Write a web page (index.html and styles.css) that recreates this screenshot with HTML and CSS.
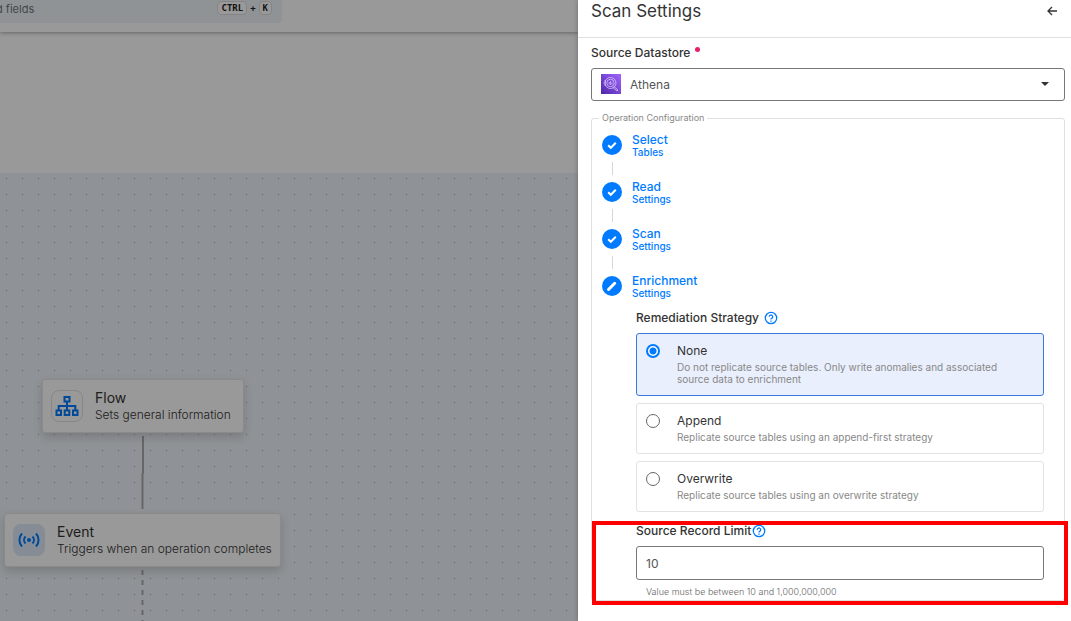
FILE: index.html
```html
<!DOCTYPE html>
<html lang="en">
<head>
<meta charset="utf-8">
<title>Scan Settings</title>
<link rel="stylesheet" href="styles.css">
</head>
<body>
<div class="app">
  <div class="workspace">
    <header class="topbar">
      <button class="search" type="button">
        <span class="search-text">d fields</span>
        <span class="shortcut"><kbd>CTRL</kbd><span>+</span><kbd>K</kbd></span>
      </button>
    </header>
    <main class="canvas">
      <svg class="edges" width="300" height="448" viewBox="0 0 300 448" aria-hidden="true">
        <path d="M143 263V300L142.500 301V336" />
        <path d="M142.500 397V448" stroke-dasharray="5 5" />
      </svg>
      <article class="node node-flow">
        <span class="node-icon outlined">
          <svg width="24" height="22" viewBox="0 0 24 22" fill="none" stroke="#007bff" stroke-width="2">
            <path d="M9.500 2h5v4.500h-5zM1.500 15.500h4.500v4.500H1.500zM9.700 15.500h4.600v4.500H9.700zM18 15.500h4.500v4.500H18zM12 6.500v9M3.700 15.500V11h16.600v4.500"/>
          </svg>
        </span>
        <div><h2>Flow</h2><p>Sets general information</p></div>
      </article>
      <article class="node node-event">
        <span class="node-icon tinted">
          <svg width="22" height="16" viewBox="0 0 22 16" fill="none" stroke="#007bff" stroke-width="2">
            <circle cx="11" cy="8" r="2" fill="#007bff" stroke="none"/>
            <path d="M7.500 4.500a5 5 0 0 0 0 7M14.500 4.500a5 5 0 0 1 0 7M4 1.500a9.500 9.500 0 0 0 0 13M18 1.500a9.500 9.500 0 0 1 0 13"/>
          </svg>
        </span>
        <div><h2>Event</h2><p>Triggers when an operation completes</p></div>
      </article>
    </main>
    <div class="backdrop"></div>
  </div>

  <aside class="drawer">
    <header class="drawer-header">
      <h1>Scan Settings</h1>
      <button class="back" type="button" aria-label="Back">
        <svg width="12" height="12" viewBox="0 0 12 12" fill="none" stroke="#333" stroke-width="1.300"><path d="M11 6H2M6 2L2 6L6 10"/></svg>
      </button>
    </header>
    <form class="drawer-body">
      <label class="label" for="datastore">Source Datastore<span class="required"></span></label>
      <div class="select-box">
        <select id="datastore"><option>Athena</option></select>
        <svg class="athena" width="20" height="20" viewBox="0 0 20 20" fill="none" stroke="#d9c4ff" aria-hidden="true">
          <defs><linearGradient id="violet" x1="0" y1="1" x2="1" y2="0"><stop offset="0" stop-color="#4d27a8"/><stop offset="1" stop-color="#a166ff"/></linearGradient></defs>
          <path d="M0 0h20v20H0z" fill="url(#violet)" stroke="none"/>
          <circle cx="9.500" cy="9" r="5.500" stroke-width=".8"/>
          <circle cx="9.500" cy="9" r="3.700" stroke-width=".8"/>
          <path d="M8.200 10.500V8M9.600 11V7M11 10.500V8.500M3 7h2M2.500 9h2.500M3 11h2" stroke-width=".8"/>
          <path d="M13 12.500l4 3.500-1 1-4-3.500z" stroke-width=".8"/>
        </svg>
        <svg class="caret" width="8" height="4" viewBox="0 0 8 4" aria-hidden="true"><path d="M0 0h8L4 4z" fill="#333"/></svg>
      </div>

      <fieldset class="config">
        <legend>Operation Configuration</legend>
        <ol class="steps">
          <li><span class="marker"><svg viewBox="0 0 20 20"><path d="M6.200 10.300l2.600 2.500 5-5"/></svg></span><span class="step-text"><strong>Select</strong><small>Tables</small></span></li>
          <li><span class="marker"><svg viewBox="0 0 20 20"><path d="M6.200 10.300l2.600 2.500 5-5"/></svg></span><span class="step-text"><strong>Read</strong><small>Settings</small></span></li>
          <li><span class="marker"><svg viewBox="0 0 20 20"><path d="M6.200 10.300l2.600 2.500 5-5"/></svg></span><span class="step-text"><strong>Scan</strong><small>Settings</small></span></li>
          <li><span class="marker"><svg viewBox="0 0 20 20"><path class="pencil" d="M6.500 13.500L12.700 7.300"/></svg></span><span class="step-text"><strong>Enrichment</strong><small>Settings</small></span></li>
        </ol>
        <div class="step-content">
          <div class="strategies" role="radiogroup" aria-labelledby="strategy-label">
            <div class="label help-label"><span id="strategy-label">Remediation Strategy</span>
              <svg class="help" viewBox="0 0 14 14"><circle cx="7" cy="7" r="5.700"/><path d="M5.300 5.700a1.700 1.700 0 1 1 2.700 1.400Q7 7.600 7 8.500M7 9.500v1.200"/></svg>
            </div>
            <label class="card"><input type="radio" name="strategy" checked><span><b>None</b><small>Do not replicate source tables. Only write anomalies and associated source data to enrichment</small></span></label>
            <label class="card"><input type="radio" name="strategy"><span><b>Append</b><small>Replicate source tables using an append-first strategy</small></span></label>
            <label class="card"><input type="radio" name="strategy"><span><b>Overwrite</b><small>Replicate source tables using an overwrite strategy</small></span></label>
          </div>
          <div class="limit">
            <div class="label help-label limit-label"><label for="limit">Source Record Limit</label>
              <svg class="help" viewBox="0 0 14 14"><circle cx="7" cy="7" r="5.700"/><path d="M5.300 5.700a1.700 1.700 0 1 1 2.700 1.400Q7 7.600 7 8.500M7 9.500v1.200"/></svg>
            </div>
            <input id="limit" type="text" inputmode="numeric" value="10" aria-describedby="limit-hint">
            <p id="limit-hint">Value must be between 10 and 1,000,000,000</p>
            <div class="highlight"></div>
          </div>
        </div>
      </fieldset>
    </form>
  </aside>
</div>
</body>
</html>
```

FILE: styles.css
```css
* { box-sizing: border-box; }
body { margin: 0; font-family: Inter, "Liberation Sans", sans-serif; font-size: 12px; line-height: 16px; color: #333; }
h1, h2, p, ol { margin: 0; padding: 0; font-weight: 400; }
svg { display: block; }
.app { display: flex; min-height: 100vh; }

.workspace { position: relative; flex: 1; min-width: 0; overflow: hidden; display: flex; flex-direction: column; background: #fff; }
.topbar { height: 32px; box-shadow: 0 1px 4px rgba(0, 0, 0, .35); }
.search { display: flex; justify-content: space-between; align-items: flex-start; width: 282px; height: 23px; padding: 1px 10px 0 0; border: 0; border-radius: 0 0 4px 0; background: #eef5fb; font: inherit; color: #70757a; }
.search-text { margin-left: -4px; font-size: 11px; }
.shortcut { display: flex; align-items: center; gap: 3px; height: 14px; color: #222; font: 700 9px/12px "DejaVu Sans Mono", monospace; }
kbd { padding: 0 3px; border: 1px solid #dcdcdc; border-radius: 4px; background: #fff; font: inherit; }

.canvas { position: relative; flex: 1; margin-top: 141px; background: conic-gradient(from 90deg at 15px 15px, #a5abb0 90deg, transparent 0) 7px 6px / 16px 16px #eef4fa; }
.edges { position: absolute; top: 0; left: 0; fill: none; stroke: #aaa; stroke-width: 2; }
.node { position: absolute; display: flex; align-items: center; gap: 12px; height: 54px; padding: 0 0 0 8px; border: 1px solid #e6e6e6; border-radius: 3px; background: #fff; box-shadow: 0 4px 10px rgba(0, 0, 0, .16); white-space: nowrap; }
.node-flow { top: 206px; left: 42px; width: 202px; }
.node-event { top: 340px; left: 4px; width: 277px; }
.node h2 { font-size: 14px; line-height: 16px; }
.node p { font-size: 12px; font-weight: 300; line-height: 17px; color: #333; }
.node-icon { display: grid; place-items: center; width: 32px; height: 32px; border-radius: 8px; }
.outlined { border: 1px solid #e0e0e0; }
.tinted { background: #dfeafa; }
.backdrop { position: absolute; inset: 0; background: rgba(0, 0, 0, .4); }

.drawer { flex: 0 0 493px; background: #fff; box-shadow: 0 0 5px rgba(0, 0, 0, .3); z-index: 1; }
.drawer-header { display: flex; align-items: flex-start; justify-content: space-between; height: 38px; padding: 0 13px; border-bottom: 1px solid #e0e0e0; }
.drawer-header h1 { font-size: 17px; line-height: 22px; }
.back { padding: 5px 0; border: 0; background: none; }
.drawer-body { padding: 7px 6px 0 13px; }
.label { display: flex; font-weight: 500; margin-bottom: 7px; }
.required { width: 5px; height: 5px; margin: 2px 0 0 5px; border-radius: 50%; background: #e91e63; }
.select-box { position: relative; }
select, .limit input { width: 100%; border: 1px solid #777; border-radius: 3px; background: #fff; font: inherit; color: #555; outline: 0; }
select { display: block; height: 33px; padding: 0 34px 0 38px; appearance: none; }
.athena { position: absolute; top: 6px; left: 10px; }
.caret { position: absolute; top: 14px; right: 16px; }

.config { min-width: 0; margin: 11px 0 0; padding: 9px 20px 2px 10px; border: 1px solid #e0e0e0; border-radius: 3px; }
legend { margin-left: -3px; padding: 0 3px; font-size: 9px; line-height: 12px; color: #888; }
.steps { list-style: none; }
.steps li { display: flex; gap: 10px; height: 47px; color: #007bff; }
.steps li:last-child { height: 26px; }
.marker { width: 20px; padding-top: 2px; }
.marker svg { width: 20px; height: 20px; border-radius: 50%; background: #007bff; fill: none; stroke: #fff; stroke-width: 2; }
.marker .pencil { stroke-width: 3; stroke-linecap: round; }
li:not(:last-child) .marker::after { content: ""; display: block; width: 1px; height: 13px; margin: 7px 0 0 10px; background: #d6d6d6; }
.step-text strong, .step-text small { display: block; font-weight: 500; }
.step-text strong { line-height: 14px; }
.step-text small { font-size: 10px; line-height: 10px; }
.step-content { padding: 10px 0 0 34px; }
.help-label { align-items: center; gap: 5px; }
.limit-label { gap: 1px; }
.help { width: 14px; height: 14px; fill: none; stroke: #007bff; stroke-width: 1.300; }
.card { display: flex; gap: 17px; margin-bottom: 7px; padding: 9px 20px 10px 9px; border: 1px solid #e2e2e2; border-radius: 3px; }
.card:has(:checked) { border-color: #3b78dc; background: #e9effc; }
.card input { flex: none; appearance: none; width: 14px; height: 14px; margin: 1px 0; border: 1px solid #666; border-radius: 50%; background: #fff; }
.card input:checked { border: 2px solid #007bff; background: radial-gradient(circle, #007bff 0 3px, #fff 4px); }
.card b { display: block; font-weight: 400; }
.card small { display: block; margin-top: 2px; font-size: 10px; line-height: 12px; color: #888; }
.limit { position: relative; margin-top: 11px; }
.limit input { display: block; height: 34px; padding: 0 9px; }
.limit p { margin-top: 6px; padding-left: 10px; font-size: 9px; font-weight: 300; line-height: 12px; color: #666; }
.highlight { position: absolute; inset: -2px -24px -7px -44px; border: 4px solid #f00; pointer-events: none; }
```
